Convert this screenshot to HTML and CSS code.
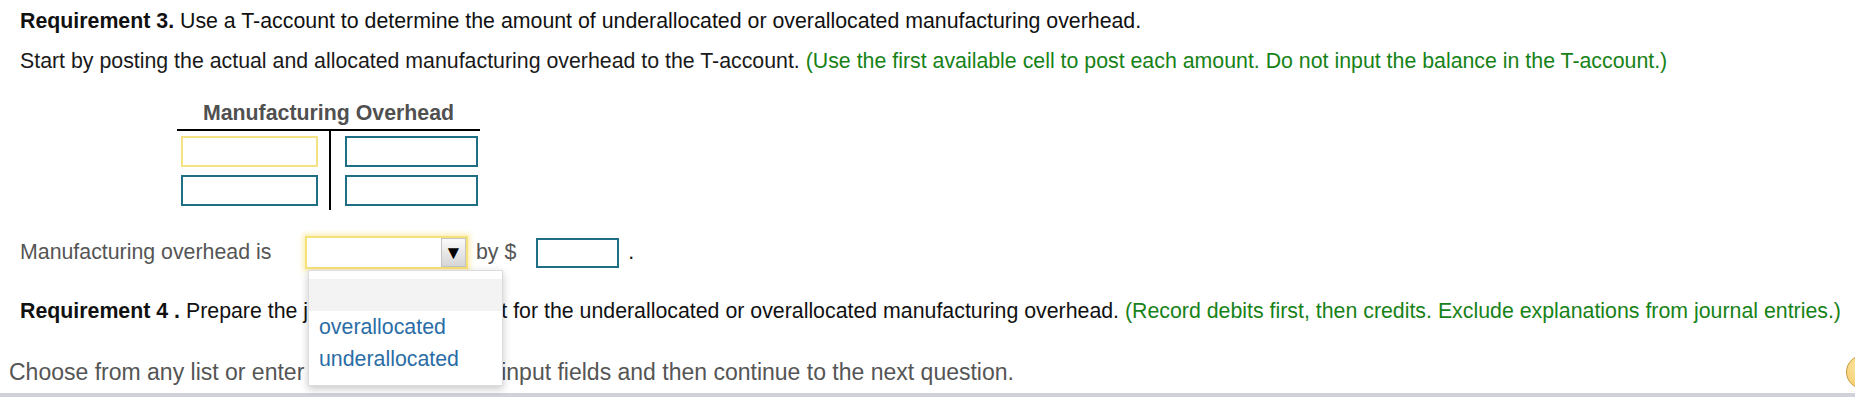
FILE: index.html
```html
<!DOCTYPE html>
<html lang="en">

<head>
    <meta charset="UTF-8">
    <title>Requirement 3</title>
    <link rel="stylesheet" href="styles.css">
</head>

<body>
    <div class="question">
        <p class="req-line"><b>Requirement 3.</b> Use a T-account to determine the amount of underallocated or overallocated manufacturing overhead.</p>
        <p class="instructions">Start by posting the actual and allocated manufacturing overhead to the T-account. <span class="hint">(Use the first available cell to post each amount. Do not input the balance in the T-account.)</span></p>

        <div class="t-account">
            <div class="t-title">Manufacturing Overhead</div>
            <div class="t-body">
                <div class="t-side t-left">
                    <div class="cell cell-active"></div>
                    <div class="cell"></div>
                </div>
                <div class="t-divider"></div>
                <div class="t-side t-right">
                    <div class="cell"></div>
                    <div class="cell"></div>
                </div>
            </div>
        </div>

        <div class="answer-row">
            <span class="answer-label">Manufacturing overhead is</span>
            <div class="select-wrap">
                <div class="select">
                    <span class="select-value"></span>
                    <span class="select-arrow">&#9660;</span>
                </div>
                <ul class="select-list">
                    <li class="option option-blank">&nbsp;</li>
                    <li class="option">overallocated</li>
                    <li class="option">underallocated</li>
                </ul>
            </div>
            <span class="by-text">by $</span>
            <div class="amount"></div>
            <span class="dot">.</span>
        </div>

        <p class="req-line req4"><b>Requirement 4 .</b> Prepare the journal entry to adjust for the underallocated or overallocated manufacturing overhead. <span class="hint">(Record debits first, then credits. Exclude explanations from journal entries.)</span></p>
    </div>

    <div class="footer">
        <p class="footer-text">Choose from any list or enter any number in the input fields and then continue to the next question.</p>
        <span class="help-dot"></span>
    </div>
</body>

</html>
```

FILE: styles.css
```css
* {
    box-sizing: border-box;
}

body {
    margin: 0;
    font-family: "Liberation Sans", Arial, sans-serif;
    font-size: 21.33px;
    color: #111;
    background: #fff;
    overflow: hidden;
}

.question {
    padding-left: 20px;
}

.req-line,
.instructions {
    margin: 0;
    line-height: 24px;
    white-space: nowrap;
}

.req-line {
    margin-top: 9px;
}

.instructions {
    margin-top: 16px;
    color: #1a1a1a;
}

.hint {
    color: #178217;
}

/* T-account */
.t-account {
    margin: 28px 0 0 157px;
    width: 303px;
}

.t-title {
    text-align: center;
    font-weight: bold;
    color: #505050;
    line-height: 24px;
    padding-bottom: 4px;
    border-bottom: 2px solid #000;
}

.t-body {
    display: flex;
}

.t-side {
    display: flex;
    flex-direction: column;
    gap: 8px;
    padding: 5px 0 4px;
}

.t-left {
    width: 152px;
    padding-left: 4px;
}

.t-right {
    width: 149px;
    padding-left: 14px;
}

.t-divider {
    width: 2px;
    background: #000;
}

.cell {
    height: 31px;
    border: 2px solid #1e6f84;
    background: #fff;
}

.t-left .cell {
    width: 137px;
}

.t-right .cell {
    width: 133px;
}

.cell-active {
    border-color: #f5e285;
}

/* answer row */
.answer-row {
    display: flex;
    align-items: center;
    margin-top: 26px;
    height: 33px;
    color: #555;
}

.answer-label {
    width: 285px;
}

.select-wrap {
    position: relative;
}

.select {
    display: flex;
    justify-content: flex-end;
    width: 163px;
    height: 33px;
    border: 2px solid #f7e17a;
    box-shadow: 0 0 5px 2px rgba(247, 225, 122, 0.6);
    background: #fff;
}

.select-arrow {
    width: 25px;
    height: 29px;
    border: 1px solid #c4c4c4;
    background: linear-gradient(#fafafa, #d6d6d6);
    color: #000;
    font-size: 19px;
    line-height: 27px;
    text-align: center;
}

.select-list {
    position: absolute;
    left: 3px;
    top: 34px;
    width: 195px;
    margin: 0;
    padding: 8px 0 10px;
    list-style: none;
    background: #fff;
    border: 1px solid #dcdcdc;
    box-shadow: 0 3px 8px rgba(0, 0, 0, 0.22);
    z-index: 2;
}

.option {
    height: 32px;
    line-height: 32px;
    padding-left: 10px;
    color: #2a6da6;
}

.option-blank {
    background: #f3f3f3;
}

.by-text {
    margin-left: 8px;
}

.amount {
    width: 83px;
    height: 30px;
    margin-left: 20px;
    border: 2px solid #1e6f84;
}

.dot {
    margin-left: 9px;
    color: #111;
}

.req4 {
    margin-top: 30px;
}

/* footer */
.footer {
    position: relative;
    margin-top: 36px;
    padding: 0 0 8px 9px;
    border-bottom: 4px solid #cfd3d9;
}

.footer-text {
    margin: 0;
    font-size: 23px;
    line-height: 26px;
    color: #555;
    white-space: nowrap;
}

.help-dot {
    position: absolute;
    left: 1846px;
    top: -4px;
    width: 34px;
    height: 34px;
    border-radius: 50%;
    border: 1px solid #c49a3e;
    background: radial-gradient(circle at 40% 35%, #fde6a2, #f3c45c);
}
```
